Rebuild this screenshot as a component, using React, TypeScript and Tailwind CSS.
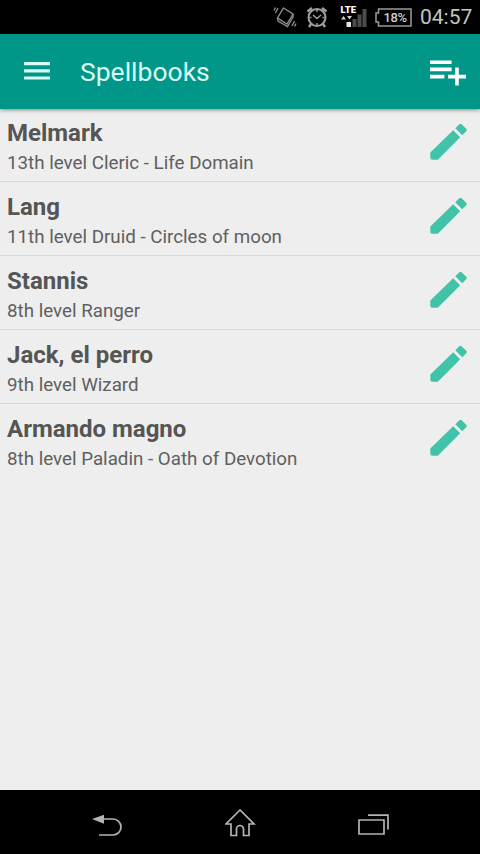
import React from 'react';

interface Spellbook {
  id: number;
  name: string;
  description: string;
}

const spellbooks: Spellbook[] = [
  { id: 1, name: 'Melmark', description: '13th level Cleric - Life Domain' },
  { id: 2, name: 'Lang', description: '11th level Druid - Circles of moon' },
  { id: 3, name: 'Stannis', description: '8th level Ranger' },
  { id: 4, name: 'Jack, el perro', description: '9th level Wizard' },
  { id: 5, name: 'Armando magno', description: '8th level Paladin - Oath of Devotion' },
];

const VibrateIcon = () => (
  <svg width="24" height="24" viewBox="0 0 24 24" fill="none" stroke="#8c8c8c" strokeWidth="1.4">
    <path d="M10.500 3l9.500 6-6 10-9.500-6z" />
    <path d="M4.500 13l.5 3 9.500 5.500L20 12V9" />
    <path d="M5 3L2.500 8M2.500 2.500L1 5.500M21.500 16l-2.500 5M23 18.500L21.500 21.500" />
  </svg>
);

const AlarmIcon = () => (
  <svg width="22" height="24" viewBox="0 0 22 24" fill="none" stroke="#a0a0a0" strokeWidth="2">
    <circle cx="11" cy="12.500" r="8.500" />
    <path d="M7 10l4 3.500 4-3.500M11 5v2M11 18v2M3.500 12.500h2M16.500 12.500h2" strokeWidth="1.400" />
    <path d="M1.500 6.500L6 3M20.500 6.500L16 3M5 19l-2 3M17 19l2 3" strokeWidth="2.400" />
  </svg>
);

const SignalIcon = () => (
  <svg width="28" height="24" viewBox="0 0 28 24">
    <path d="M1 14.500l2.500-3.500L6 14.500zM7 11h5L9.500 14.500z" fill="#d0d0d0" />
    <path d="M6.500 17H11v5H6.500z" fill="#e6e6e6" />
    <path d="M12.500 14h4v8h-4zM17.500 9.500h4V22h-4zM22.500 4h4v18h-4z" fill="#4c4c4c" />
  </svg>
);

const BatteryIcon = () => (
  <svg width="37" height="19" viewBox="0 0 37 19" fill="none" stroke="#9a9a9a" strokeWidth="1.500">
    <path d="M3.500 1H36v17H3.500v-4H1V5h2.500z" />
  </svg>
);

const MenuIcon = () => (
  <svg width="26" height="18" viewBox="0 0 26 18" fill="#d8fbf5">
    <path d="M0 0h26v3.200H0zM0 7.200h26v3.200H0zM0 14.400h26v3.200H0z" />
  </svg>
);

const PlaylistAddIcon = () => (
  <svg width="36" height="26" viewBox="2 6 20 14" fill="#ffffff">
    <path d="M14 10H2v2h12v-2zm0-4H2v2h12V6zm4 8v-4h-2v4h-4v2h4v4h2v-4h4v-2h-4zM2 16h8v-2H2v2z" />
  </svg>
);

const PencilIcon = () => (
  <svg width="37" height="37" viewBox="0 0 37 37" fill="#41c3a9">
    <path d="M.3 29.500L23.200 7.200l7 7L7.800 36.800H2.300q-2 0-2-2z" />
    <path d="M25.300 5.300l4-4q1.200-1 2.400 0l4.500 4.500q1.200 1.200 0 2.400l-4 4z" />
  </svg>
);

const BackIcon = () => (
  <svg width="32" height="24" viewBox="0 0 32 24" fill="none" stroke="#b4b4b4" strokeWidth="1.700">
    <path d="M11 7h10a8 8 0 0 1 0 16H7" />
    <path d="M0 7l12-4.300v9z" fill="#b4b4b4" stroke="none" />
  </svg>
);

const HomeIcon = () => (
  <svg width="32" height="28" viewBox="0 0 32 28" fill="none" stroke="#b4b4b4" strokeWidth="1.700">
    <path d="M15 1L1 15h5v11.500h5.500V20a3.500 3.500 0 0 1 7 0v6.500H24V15h5z" />
  </svg>
);

const RecentsIcon = () => (
  <svg width="32" height="21" viewBox="0 0 32 21" fill="none" stroke="#b4b4b4" strokeWidth="1.700">
    <path d="M2 6h25v14H2z" />
    <path d="M11 1.200h20V15.500" />
  </svg>
);

const StatusBar: React.FC = () => (
  <div className="flex h-[34px] shrink-0 items-center bg-black pl-[273px]">
    <VibrateIcon />
    <div className="ml-[9px]">
      <AlarmIcon />
    </div>
    <div className="relative ml-[12px]">
      <SignalIcon />
      <span className="absolute left-[0.500px] -top-[0.500px] text-[9.500px] leading-[9px] font-black text-white">LTE</span>
    </div>
    <div className="relative ml-[7px]">
      <BatteryIcon />
      <span className="absolute inset-0 pl-[3px] text-center text-[13px] leading-[19px] tracking-[-0.400px] font-medium text-[#d0d0d0]">
        18%
      </span>
    </div>
    <span className="ml-[8px] pt-[2px] text-[21px] text-[#c4c4c4]">04:57</span>
  </div>
);

const App: React.FC = () => {
  return (
    <div className="flex h-screen w-full flex-col overflow-hidden bg-[#eeeeee] font-[Roboto,sans-serif]">
      <StatusBar />

      {/* Toolbar */}
      <header className="z-10 flex h-[75px] shrink-0 items-center bg-[#009688] pr-[14px] pl-[24px] shadow-[0_1px_4px_rgba(0,0,0,0.45)]">
        <button className="pb-[2px]">
          <MenuIcon />
        </button>
        <h1 className="ml-[30px] flex-1 text-[26.500px] text-[#d8fbf5]">Spellbooks</h1>
        <button className="pt-[3px]">
          <PlaylistAddIcon />
        </button>
      </header>

      {/* Spellbook list */}
      <ul className="flex-1">
        {spellbooks.map((book) => (
          <li
            key={book.id}
            className="flex h-[74px] items-start justify-between border-b border-[#d9d9d9] pt-[11px] pr-[13px] pl-[7px] first:h-[73px] first:pt-[10px] last:border-b-0"
          >
            <div>
              <p className="text-[24px] leading-[29px] font-bold text-[#555555]">{book.name}</p>
              <p className="pt-[1px] text-[18.750px] leading-[29px] text-[#606060]">{book.description}</p>
            </div>
            <button className="mt-[4px]">
              <PencilIcon />
            </button>
          </li>
        ))}
      </ul>

      {/* Navigation keys */}
      <nav className="flex h-[64px] shrink-0 items-center justify-between bg-black pt-[4px] pr-[91px] pl-[92px]">
        <BackIcon />
        <div className="pb-[3px]">
          <HomeIcon />
        </div>
        <RecentsIcon />
      </nav>
    </div>
  );
};

export default App;
